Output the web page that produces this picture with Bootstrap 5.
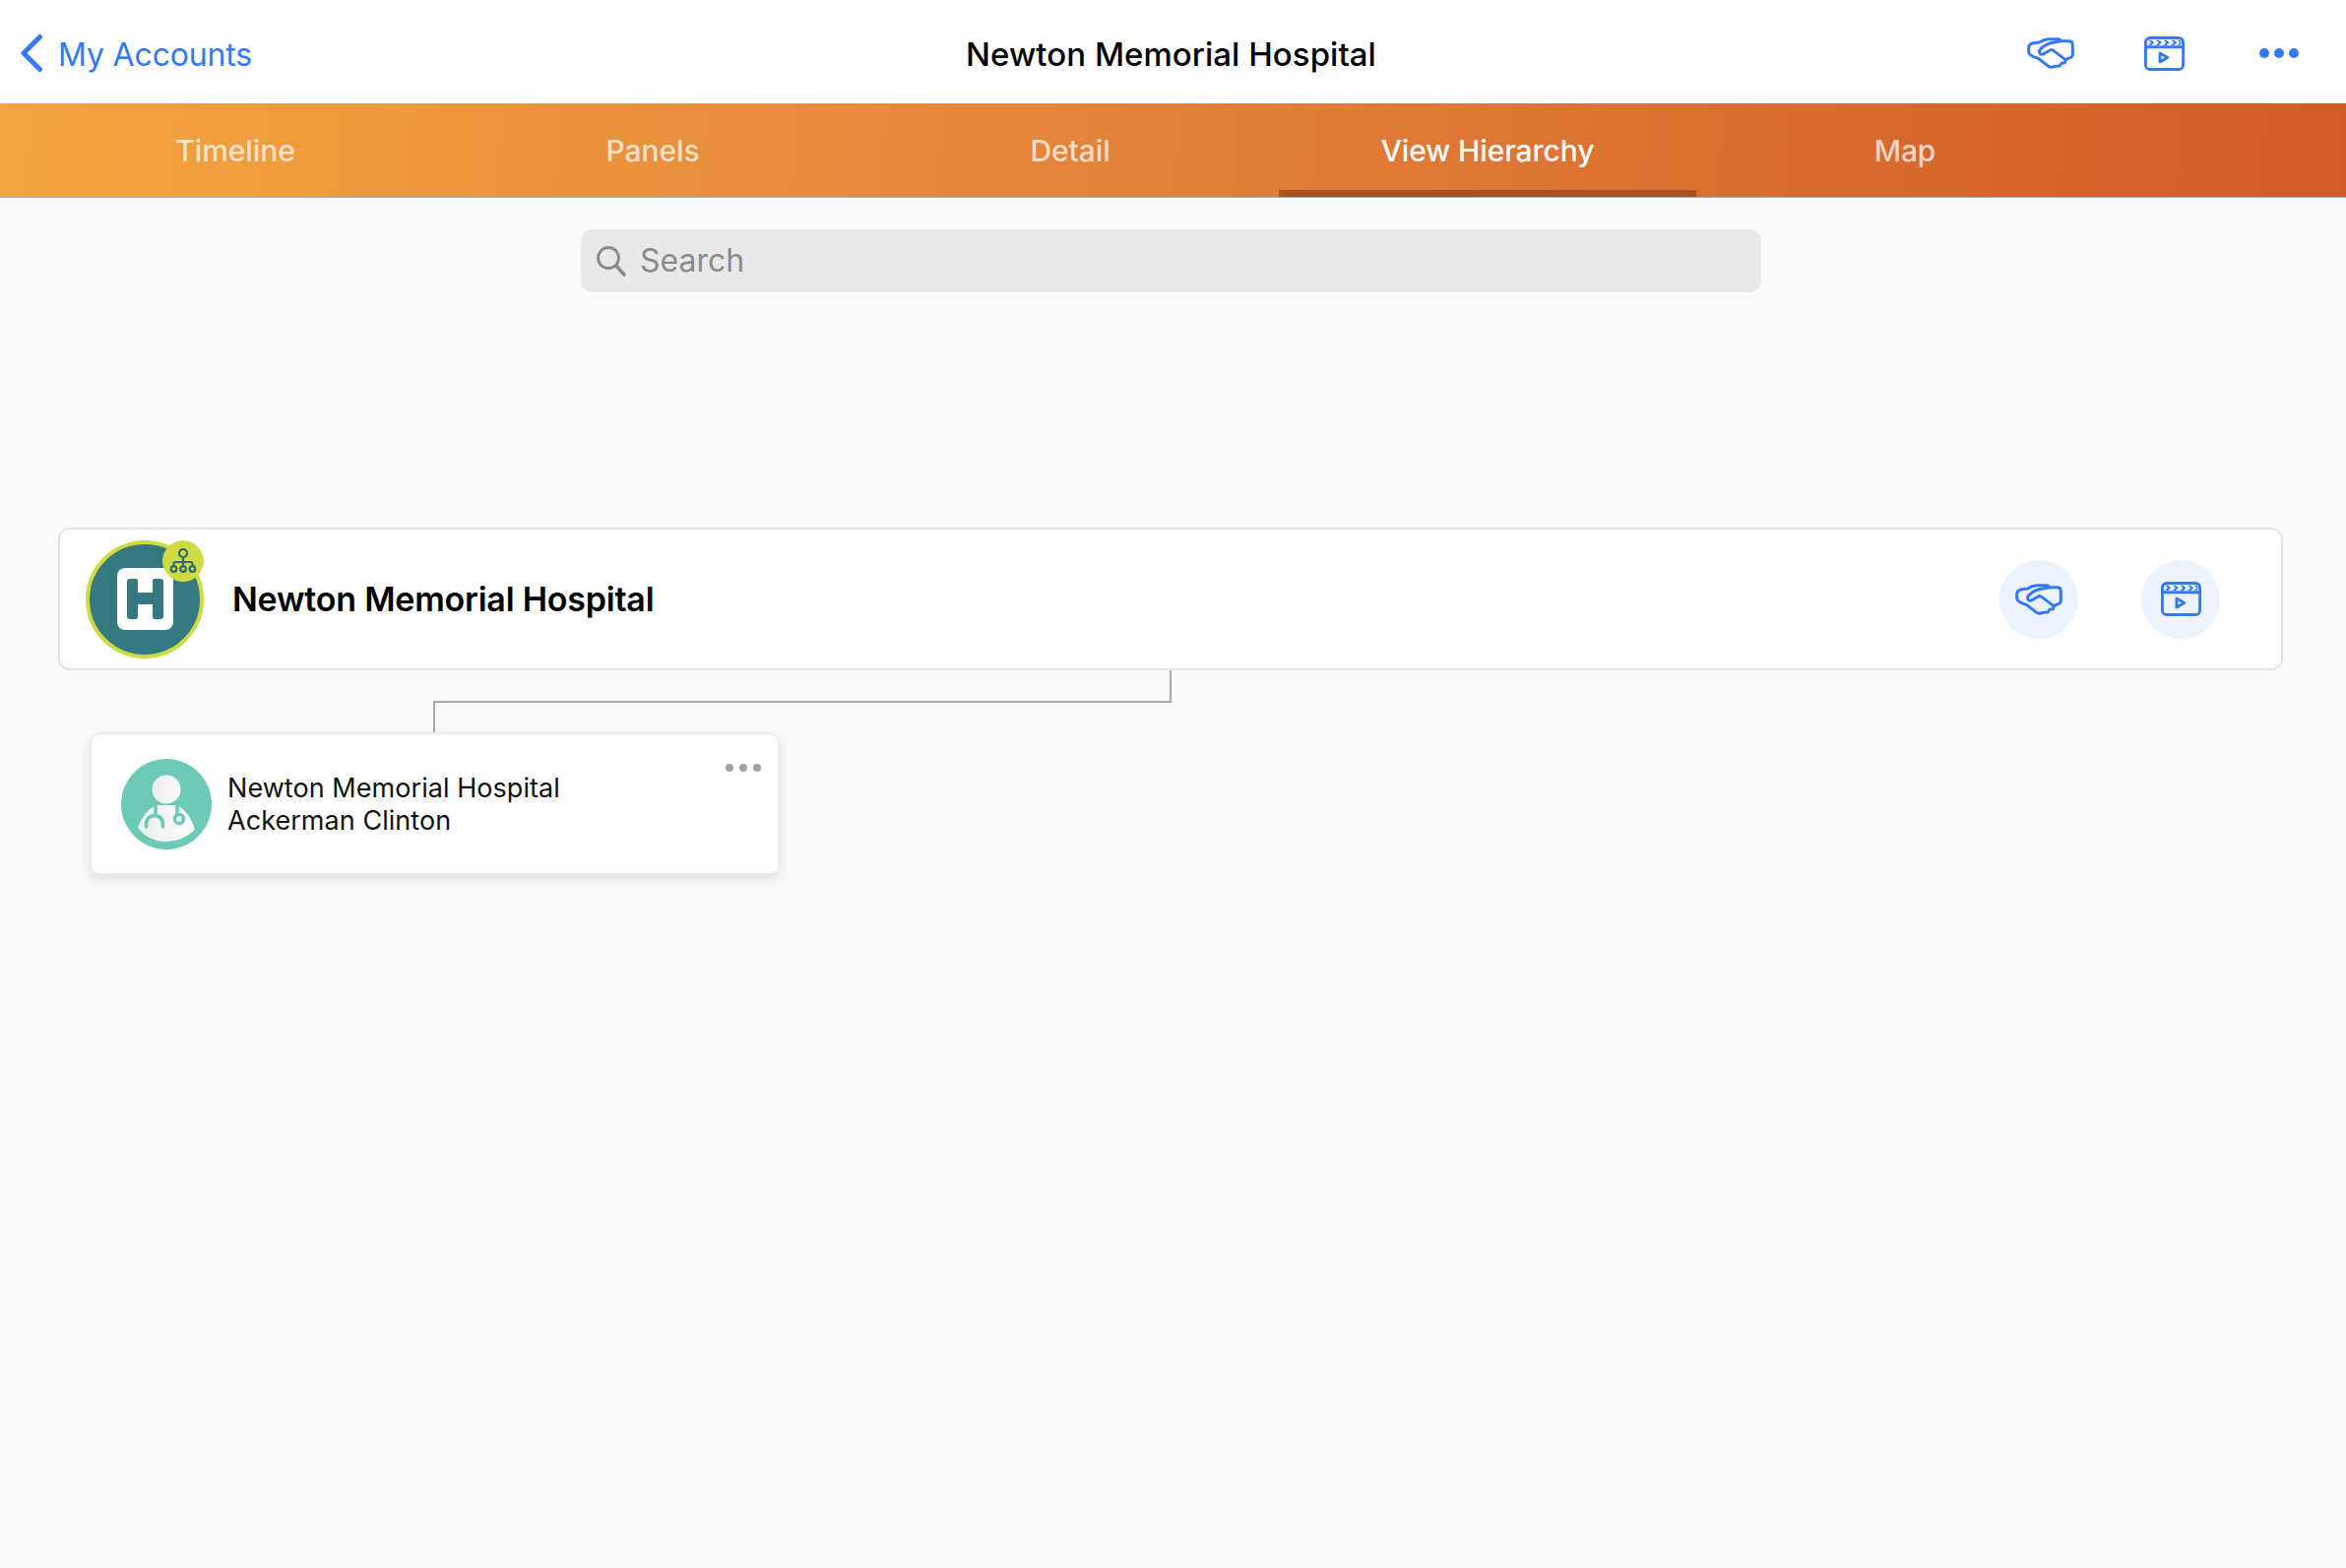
<!DOCTYPE html>
<html lang="en">
<head>
<meta charset="utf-8">
<title>Newton Memorial Hospital</title>
<link href="https://cdn.jsdelivr.net/npm/bootstrap@5.3.0/dist/css/bootstrap.min.css" rel="stylesheet">
<style>
html,body{height:100%}
body{background:#fafafa;font-family:Inter,"Liberation Sans",sans-serif;color:#000;overflow:hidden}
.top-bar{height:105px;background:#fff;padding:3px 0 0;flex-wrap:nowrap}
.back-link{font-size:32px;color:#3478f6;text-decoration:none;gap:16px;margin-left:21px;letter-spacing:-.15px;line-height:38px}
.back-link span{padding-top:3px}
.page-title{font-size:33px;font-weight:500;left:-4px;right:0;top:0;height:105px;line-height:110px;text-align:center;pointer-events:none;letter-spacing:.03px}
.top-icons{margin-right:48px}
.top-icons svg{display:block}
.ic-hands{width:48px;height:32px}
.ic-clap{width:41px;height:35px}
.ic-more{width:40px;height:12px}
.slot-a{margin-right:71px}
.slot-b{margin-right:76px}
.tab-strip{height:96px;background:linear-gradient(95deg,#f3a53f 0%,#e2813a 50%,#d15a25 100%);border-bottom:1px solid #aaa;padding-left:27px;flex-wrap:nowrap}
.tab-strip .nav-link{width:424px;height:95px;padding:9px 0 0;display:flex;align-items:center;justify-content:center;font-size:30px;font-weight:500;color:rgba(255,255,255,.72);border-bottom:7px solid transparent;letter-spacing:-.1px}
.tab-strip .nav-link.active{color:#fff;border-bottom-color:#a9511f}
.search-box{width:1199px;height:64px;margin:32px 0 0 590px;background:#e9e9e9;border-radius:12px;padding-left:15px;gap:13px;color:#8a8a8a;font-size:32px}
.search-box svg{width:32px;height:32px}
.acct-card{margin:239px 0 0 59px;width:2260px;height:145px;border:2px solid #e4e4e4;border-radius:12px;padding-left:26px;background:#fff}
.acct-avatar{width:120px;height:120px;border-radius:50%;background:#35787f;border:4px solid #cfdb44;flex:none}
.h-tile{width:57px;height:63px;background:#fff;border-radius:8px}
.h-tile svg{width:37px;height:41px;display:block}
.hier-badge{width:42px;height:42px;border-radius:50%;background:#cfdb44;right:-4px;top:-4px}
.hier-badge svg{width:28px;height:26px}
.acct-name{font-size:34px;font-weight:600;margin-left:29px;letter-spacing:-.22px;padding-bottom:1px}
.round-btn{width:80px;height:80px;border-radius:50%;background:#ecf3fd;border:0;padding:0}
.round-gap{gap:64px;margin-right:62px}
.link-zone{margin-left:440px;width:750px;height:63px}
.link-drop{height:33px;border-right:2px solid #a9a9a9;border-bottom:2px solid #a9a9a9}
.link-rise{width:2px;height:30px;background:#a9a9a9}
.staff-card{margin-left:91px;width:701px;height:145px;border:2px solid #ececec;border-radius:10px;background:#fff;box-shadow:0 5px 12px rgba(0,0,0,.1);padding-left:30px}
.staff-avatar{width:92px;height:92px;flex:none;display:block}
.staff-text{font-size:27px;line-height:33px;margin-left:16px;color:#111;letter-spacing:.05px}
.staff-more{width:36px;height:8px;right:17px;top:30px}
</style>
</head>
<body>
<svg width="0" height="0" class="position-absolute">
  <defs>
    <linearGradient id="shade" x1="0" x2="1" y1="0" y2="0"><stop offset="0" stop-color="#ececec"/><stop offset=".6" stop-color="#f6f6f6"/><stop offset="1" stop-color="#fff"/></linearGradient>
    <symbol id="hands" viewBox="0 0 145 96">
      <g fill="none" stroke="#3478f6" stroke-width="9" stroke-linejoin="round" stroke-linecap="round">
        <path d="M5 32 Q5 22 15 18 L38 15 Q52 5 66 5 L96 5 Q102 5 104 11 L128 11 Q140 11 140 22 L140 52 Q140 62 126 64 L118 68 L116 77 L106 79 L100 87 L88 88 L76 91 Q70 91 64 87 L34 64 L18 58 Q5 52 5 42 Z"/>
        <path d="M104 11 L72 17 Q50 24 38 40 Q36 52 48 52 L72 38 Q78 36 86 44 L118 68"/>
      </g>
    </symbol>
    <symbol id="clap" viewBox="0 0 40 34">
      <g fill="none" stroke="#3478f6" stroke-width="2.800" stroke-linejoin="round">
        <rect x="1.400" y="1.400" width="37.200" height="31.200" rx="4.500"/>
        <path d="M1.400 10.400H38.600"/>
        <path d="M15.600 16.600v8.800l7.600-4.400z" stroke-linecap="round"/>
      </g>
      <g fill="#3478f6">
        <path d="M4 3.500l3 2.600-3 2.600h3l3-2.600-3-2.600zM11.500 3.500l3 2.600-3 2.600h3l3-2.600-3-2.600zM19 3.500l3 2.600-3 2.600h3l3-2.600-3-2.600zM26.500 3.500l3 2.600-3 2.600h3l3-2.600-3-2.600zM33 3.500l2.600 2.600-2.600 2.600h2.600l1.200-2.600-1.200-2.600z"/>
      </g>
    </symbol>
  </defs>
</svg>

<nav class="navbar top-bar position-relative d-flex align-items-center justify-content-between">
  <a class="back-link d-flex align-items-center" href="#">
    <svg width="22" height="38" viewBox="0 0 22 38"><path d="M19.500 2.500 L3 19 L19.500 35.500" fill="none" stroke="#3478f6" stroke-width="4.800" stroke-linecap="round" stroke-linejoin="round"/></svg>
    <span>My Accounts</span>
  </a>
  <div class="page-title position-absolute">Newton Memorial Hospital</div>
  <div class="top-icons d-flex align-items-center">
    <svg class="ic-hands slot-a"><use href="#hands"/></svg>
    <svg class="ic-clap slot-b"><use href="#clap"/></svg>
    <svg class="ic-more" viewBox="0 0 40 12"><g fill="#3478f6"><circle cx="5" cy="6" r="5"/><circle cx="20" cy="6" r="5"/><circle cx="35" cy="6" r="5"/></g></svg>
  </div>
</nav>

<ul class="nav tab-strip">
  <li class="nav-item"><a class="nav-link" href="#">Timeline</a></li>
  <li class="nav-item"><a class="nav-link" href="#">Panels</a></li>
  <li class="nav-item"><a class="nav-link" href="#">Detail</a></li>
  <li class="nav-item"><a class="nav-link active" href="#">View Hierarchy</a></li>
  <li class="nav-item"><a class="nav-link" href="#">Map</a></li>
</ul>

<div class="search-box d-flex align-items-center">
  <svg viewBox="0 0 32 32"><g fill="none" stroke="#8a8a8a" stroke-linecap="round"><circle cx="13" cy="13" r="10.500" stroke-width="2.800"/><path d="M21 21 L29 30" stroke-width="3.600"/></g></svg>
  <span>Search</span>
</div>

<div class="acct-card d-flex align-items-center">
  <div class="acct-avatar position-relative d-flex align-items-center justify-content-center">
    <div class="h-tile d-flex align-items-center justify-content-center">
      <svg viewBox="0 0 37 41"><path d="M3 0h6a2 2 0 0 1 2 2v12h15V2a2 2 0 0 1 2-2h6a3 3 0 0 1 3 3v35a3 3 0 0 1-3 3h-6a2 2 0 0 1-2-2V26H11v13a2 2 0 0 1-2 2H3a3 3 0 0 1-3-3V3a3 3 0 0 1 3-3z" fill="#35787f"/></svg>
    </div>
    <div class="hier-badge position-absolute d-flex align-items-center justify-content-center">
      <svg viewBox="0 0 28 26"><g fill="none" stroke="#2f6b6e" stroke-width="2.200"><circle cx="14" cy="5" r="4"/><circle cx="4.500" cy="21" r="2.800"/><circle cx="14" cy="21" r="2.800"/><circle cx="23.500" cy="21" r="2.800"/><path d="M14 9v9M4.500 18v-2a2 2 0 0 1 2-2h15a2 2 0 0 1 2 2v2"/></g></svg>
    </div>
  </div>
  <div class="acct-name flex-grow-1">Newton Memorial Hospital</div>
  <div class="d-flex round-gap">
    <button class="round-btn btn d-flex align-items-center justify-content-center" type="button" aria-label="Partners"><svg class="ic-hands"><use href="#hands"/></svg></button>
    <button class="round-btn btn d-flex align-items-center justify-content-center" type="button" aria-label="Videos"><svg class="ic-clap"><use href="#clap"/></svg></button>
  </div>
</div>

<div class="link-zone d-flex flex-column">
  <div class="link-drop"></div>
  <div class="link-rise"></div>
</div>

<div class="staff-card position-relative d-flex align-items-center">
  <svg class="staff-avatar" viewBox="0 0 92 92">
    <circle cx="46" cy="46" r="46" fill="#6ccab6"/>
    <circle cx="46" cy="31" r="14.500" fill="url(#shade)"/>
    <path d="M17 70 Q22 54 35 47 L57 47 Q70 54 75 72 Q62 84 46 84 Q28 84 17 70z" fill="url(#shade)"/>
    <g fill="none" stroke="#6ccab6" stroke-width="3.600" stroke-linecap="round">
      <path d="M35 47V57"/>
      <path d="M25.500 69Q25 58 34 57.500Q43 58 42.500 69"/>
      <path d="M57 47V56"/>
      <circle cx="59" cy="61" r="4.500"/>
    </g>
  </svg>
  <div class="staff-text">Newton Memorial Hospital<br>Ackerman Clinton</div>
  <svg class="staff-more position-absolute" viewBox="0 0 36 8"><g fill="#a2a2a2"><circle cx="4" cy="4" r="4"/><circle cx="18" cy="4" r="4"/><circle cx="32" cy="4" r="4"/></g></svg>
</div>

<script src="https://cdn.jsdelivr.net/npm/bootstrap@5.3.0/dist/js/bootstrap.bundle.min.js"></script>
</body>
</html>
